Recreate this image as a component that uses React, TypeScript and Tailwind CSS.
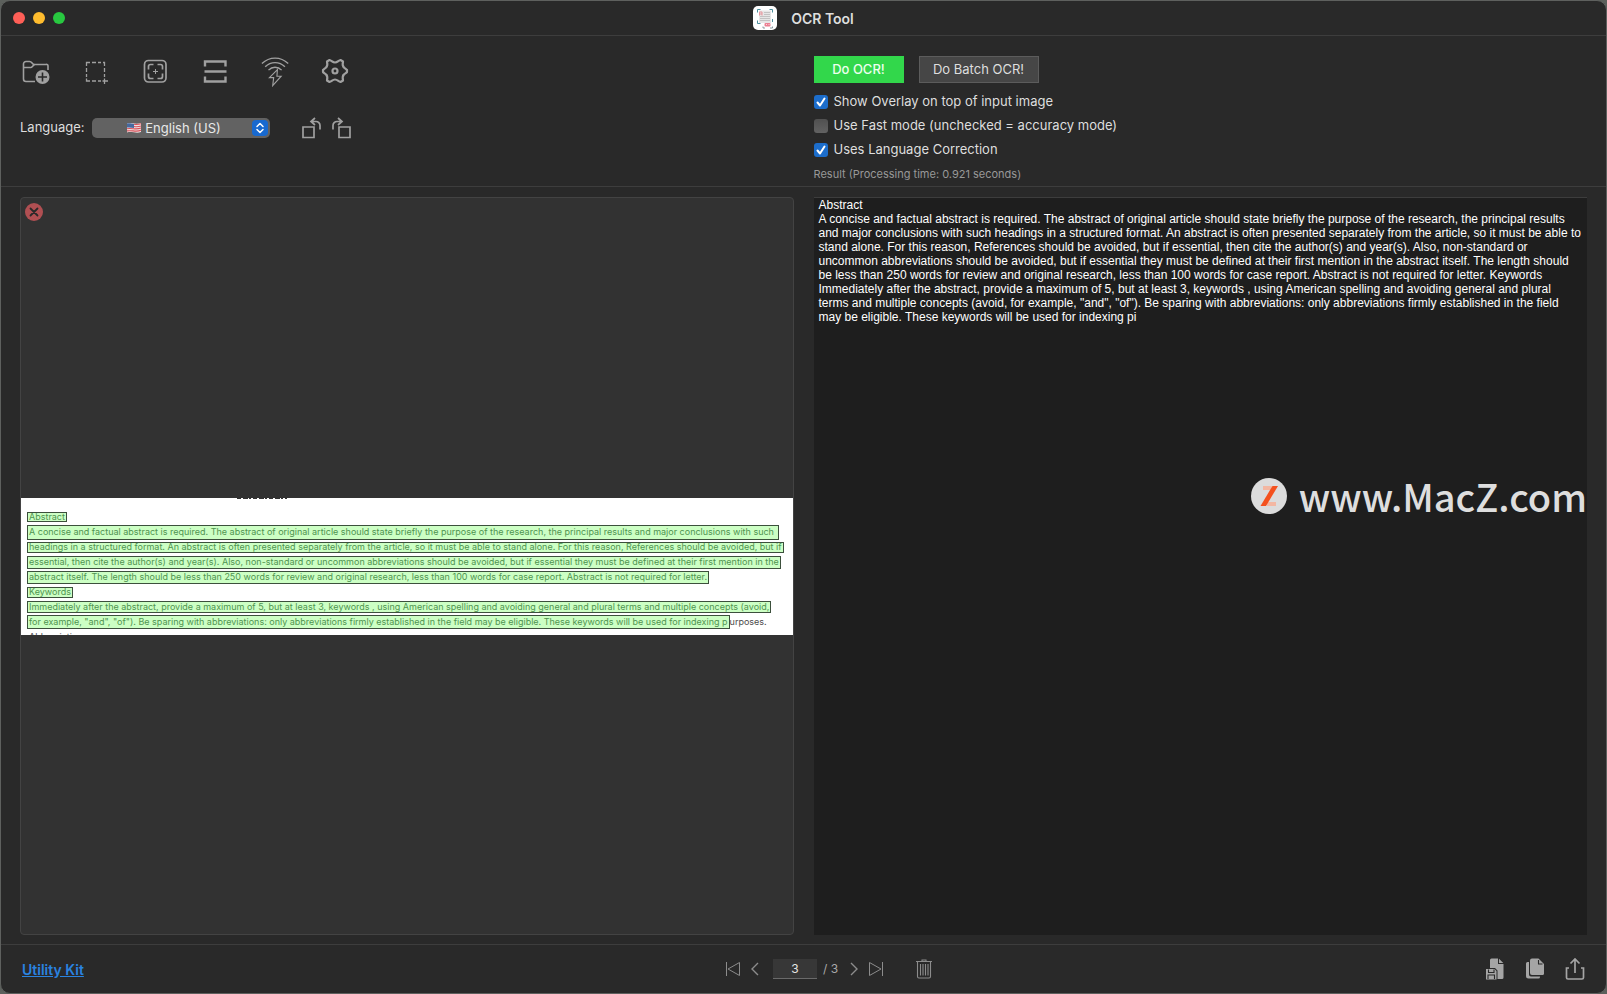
import React, { useState } from "react";

const RESULT_TEXT = `Abstract
A concise and factual abstract is required. The abstract of original article should state briefly the purpose of the research, the principal results and major conclusions with such headings in a structured format. An abstract is often presented separately from the article, so it must be able to stand alone. For this reason, References should be avoided, but if essential, then cite the author(s) and year(s). Also, non-standard or uncommon abbreviations should be avoided, but if essential they must be defined at their first mention in the abstract itself. The length should be less than 250 words for review and original research, less than 100 words for case report. Abstract is not required for letter. Keywords Immediately after the abstract, provide a maximum of 5, but at least 3, keywords , using American spelling and avoiding general and plural terms and multiple concepts (avoid, for example, "and", "of"). Be sparing with abbreviations: only abbreviations firmly established in the field may be eligible. These keywords will be used for indexing pi`;

// Recognised lines, each with the height of its bounding box
const scanLines = [
  { text: "Abstract", box: "h-[10px]", rest: "" },
  { text: "A concise and factual abstract is required. The abstract of original article should state briefly the purpose of the research, the principal results and major conclusions with such", box: "h-[15px] pr-1", rest: "" },
  { text: "headings in a structured format. An abstract is often presented separately from the article, so it must be able to stand alone. For this reason, References should be avoided, but if", box: "h-[11px]", rest: "" },
  { text: "essential, then cite the author(s) and year(s). Also, non-standard or uncommon abbreviations should be avoided, but if essential they must be defined at their first mention in the", box: "h-[13px]", rest: "" },
  { text: "abstract itself. The length should be less than 250 words for review and original research, less than 100 words for case report. Abstract is not required for letter.", box: "h-[13px]", rest: "" },
  { text: "Keywords", box: "h-[11px]", rest: "" },
  { text: "Immediately after the abstract, provide a maximum of 5, but at least 3, keywords , using American spelling and avoiding general and plural terms and multiple concepts (avoid,", box: "h-[12px]", rest: "" },
  { text: "for example, \"and\", \"of\"). Be sparing with abbreviations: only abbreviations firmly established in the field may be eligible. These keywords will be used for indexing p", box: "h-[14px]", rest: "urposes." },
];

interface IconProps {
  className?: string;
}

const FolderAddIcon = ({ className }: IconProps) => (
  <svg className={className} viewBox="0 0 30 30" fill="none" stroke="currentColor" strokeWidth="1.600">
    <path d="M14 24.500H5a2.500 2.500 0 0 1-2.500-2.500V7A2.500 2.500 0 0 1 5 4.500h3.500c1.500 0 2 .8 2.800 1.800.6.8 1 1.200 2.200 1.200h11.500A1.500 1.500 0 0 1 27 9v4" />
    <path d="M2.500 10.500H10c1.500 0 2.300-3 4-3" />
    <circle cx="21.500" cy="20" r="7" fill="currentColor" stroke="none" />
    <path d="M21.500 15.500v9M17 20h9" stroke="#292929" />
  </svg>
);

const SelectAreaIcon = ({ className }: IconProps) => (
  <svg className={className} viewBox="0 0 30 30" fill="none" stroke="currentColor" strokeWidth="1.300">
    <path d="M5.500 9V5.500H9M11 5.500h4M17 5.500h3M22 5.500h1.500V9M5.500 11v4M5.500 17v3M5.500 21.500V24H9M11 24h4M17 24h3M23.500 11v4M23.500 17v3M21.500 24h5.500M23.500 21.500V27" />
  </svg>
);

const FocusIcon = ({ className }: IconProps) => (
  <svg className={className} viewBox="0 0 30 30" fill="none" stroke="currentColor" strokeWidth="1.700">
    <rect x="3.500" y="3.500" width="21.500" height="21.500" rx="4" />
    <path d="M7.500 12.500v-3a2 2 0 0 1 2-2h3M16.500 7.500h3a2 2 0 0 1 2 2v3M21.500 16.500v3a2 2 0 0 1-2 2h-3M12.500 21.500h-3a2 2 0 0 1-2-2v-3" />
    <path d="M14.500 12v5M12 14.500h5" strokeWidth="1" />
  </svg>
);

const ScanIcon = ({ className }: IconProps) => (
  <svg className={className} viewBox="0 0 30 30" fill="none" stroke="currentColor" strokeWidth="2.400">
    <path d="M4 9.500V4.500h20.500v5M4 19.500v5h20.500v-5M3.500 14.500h22" />
  </svg>
);

const FlashIcon = ({ className }: IconProps) => (
  <svg className={className} viewBox="0 0 30 32" fill="none" stroke="currentColor" strokeWidth="1.500">
    <path d="M0 7C8-.7 20-.7 28 7M3.500 10.500c6-6 15-6 21 0M7 14c4-4 10-4 14 0" />
    <path d="M16.500 13.500 8 22h4.500L11.500 30.500l9-10H16z" strokeWidth="1.200" />
  </svg>
);

const GearIcon = ({ className }: IconProps) => (
  <svg className={className} viewBox="1 1 30 30" fill="none" stroke="currentColor" strokeWidth="2.200" strokeLinejoin="round">
    <path d="M9.500 4C11.500 4.500 12.500 6.500 15 6.500S18.500 4.500 20.500 4L23 5.500c-.5 2.500-1 4.500 1 6 1 1 2.300 1.500 3 2.500v2c-.7 1-2 1.500-3 2.500-2 1.500-1.500 3.500-1 6L20.500 26c-2-.5-3-2.500-5.500-2.500s-3.500 2-5.500 2.500L7 24.500c.5-2.500 1-4.500-1-6-1-1-2.300-1.500-3-2.500v-2c.7-1 2-1.500 3-2.500 2-1.500 1.500-3.500 1-6z" />
    <circle cx="15" cy="15" r="2.500" />
  </svg>
);

const RotateIcon = ({ className }: IconProps) => (
  <svg className={className} viewBox="0 0 22 24" fill="none" stroke="currentColor" strokeWidth="1.700">
    <path d="M2 11h11v10.500H2z" />
    <path d="M19 13.500V9.500A4 4 0 0 0 15 5.500H10.500M14 2l-4 3.500L14 9" />
  </svg>
);

const FlagIcon = ({ className }: IconProps) => (
  <svg className={className} viewBox="0 0 16 12">
    <path d="M1 1.500C5 0 9 3 15 1v9c-5 2-9-1-14 .5z" fill="#eee0e0" />
    <path d="M8 2.300c3 .4 5 .2 7-.6M8 4.500c3 .4 5 .2 7-.6M1 6.700c5-1 9 1.500 14-.6M1 8.900c5-1 9 1.500 14-.6" stroke="#d9525b" strokeWidth="1.100" fill="none" />
    <path d="M1 1.500C3.500.8 6 1.800 8 2v4c-2-.2-4.500-1-7-.4z" fill="#46699f" />
  </svg>
);

const AppIcon = ({ className }: IconProps) => (
  <svg className={className} viewBox="0 0 24 24" fill="none">
    <rect width="24" height="24" rx="5" fill="#fff" />
    <path d="M6 4.500h12v12.500H6z" fill="#e6e6e6" />
    <path d="M11 6.500H17M11 8.500H17M7 10.500H17M7 12.500H17M7 14.500H17" stroke="#b9b9b9" strokeWidth=".8" />
    <path d="M4.500 6.500V3.500H7.500M16.500 3.500h3V6.500M4.500 14.500v3H7.500M19.500 13v3" stroke="#4b8f9d" />
    <path d="M6.500 9.500V6h2.500v3.500M6.500 8h2.500" stroke="#e6959c" />
    <rect x="11.500" y="17" width="6" height="3.500" rx="1" fill="#ec7f92" />
    <path d="M13 18.500h1M15.500 18.500h1" stroke="#fff" strokeWidth=".7" />
    <path d="M10 20.500v1.500h2M17 22h2.500v-1.500" stroke="#71828b" strokeWidth=".8" />
  </svg>
);

const FirstPageIcon = ({ className }: IconProps) => (
  <svg className={className} viewBox="0 0 16 16" fill="none" stroke="currentColor" strokeWidth="1">
    <path d="M1.500 1v14M14.500 1.500v13L3 8z" />
  </svg>
);

const ChevronIcon = ({ className }: IconProps) => (
  <svg className={className} viewBox="0 0 8 14" fill="none" stroke="currentColor" strokeWidth="1.400">
    <path d="M7 1 1 7l6 6" />
  </svg>
);

const TrashIcon = ({ className }: IconProps) => (
  <svg className={className} viewBox="0 0 16 20" fill="none" stroke="currentColor" strokeWidth="1.100">
    <path d="M0 2.500h16M6 2.500V1h4v1.500M1.500 3v14.500a1.500 1.500 0 0 0 1.500 1.500h10a1.500 1.500 0 0 0 1.500-1.500V3M4.500 5v11.500M7 5v11.500M9.500 5v11.500M12 5v11.500" />
  </svg>
);

const SaveFileIcon = ({ className }: IconProps) => (
  <svg className={className} viewBox="0 0 20 22">
    <path d="M5 2a1.500 1.500 0 0 1 1.500-1.500H13V6h5.500v13.500A1.500 1.500 0 0 1 17 21h-4.500v-8.500L10 10H5zM14 .8 18.300 5H14z" fill="currentColor" />
    <path d="M1 11h8.500l2 2v8.500H1z" fill="currentColor" />
    <path d="M3.500 11.500v3H9v-3M3 21v-4h6.500v4" fill="none" stroke="#292929" strokeWidth="1.100" />
  </svg>
);

const CopyIcon = ({ className }: IconProps) => (
  <svg className={className} viewBox="0 0 20 22">
    <path d="M1 5.500A1.500 1.500 0 0 1 2.500 4H4v12.500a2 2 0 0 0 2 2h9v.5a1.500 1.500 0 0 1-1.500 1.500h-10A2.500 2.500 0 0 1 1 18z" fill="currentColor" />
    <path d="M7 .5h6.500l5.500 5.500v9.500A1.500 1.500 0 0 1 17.500 17H7a2 2 0 0 1-2-2V2.500a2 2 0 0 1 2-2z" fill="currentColor" />
    <path d="M13.500 2v4h4" fill="none" stroke="#292929" strokeWidth="1.100" />
  </svg>
);

const ShareIcon = ({ className }: IconProps) => (
  <svg className={className} viewBox="0 0 20 24" fill="none" stroke="currentColor" strokeWidth="1.700">
    <path d="M4 11H1.500v9.500a1.500 1.500 0 0 0 1.500 1.500h14a1.500 1.500 0 0 0 1.500-1.500V11H16M10 16V2M5.500 6.500 10 2l4.500 4.500" />
  </svg>
);

const tools = [
  { name: "Open files", icon: FolderAddIcon },
  { name: "Select area", icon: SelectAreaIcon },
  { name: "Capture screen", icon: FocusIcon },
  { name: "Scan document", icon: ScanIcon },
  { name: "Quick capture", icon: FlashIcon },
  { name: "Settings", icon: GearIcon },
];

interface CheckOptionProps {
  label: string;
  checked: boolean;
  onChange: (value: boolean) => void;
}

function CheckOption({ label, checked, onChange }: CheckOptionProps) {
  return (
    <label className="flex h-6 w-fit items-center gap-[6px] text-[13px]">
      <span className="grid">
        <input
          type="checkbox"
          checked={checked}
          onChange={(e) => onChange(e.target.checked)}
          className="col-start-1 row-start-1 h-[14px] w-[14px] appearance-none rounded-[3px] bg-linear-to-b from-[#505050] to-[#626262] checked:from-[#1c6dcb] checked:to-[#1c6dcb]"
        />
        {checked && (
          <svg className="pointer-events-none col-start-1 row-start-1 h-[14px] w-[14px]" viewBox="0 0 14 14" fill="none" stroke="#fff" strokeWidth="2" strokeLinecap="round" strokeLinejoin="round">
            <path d="m3.500 7.500 2.500 3 4.500-7" />
          </svg>
        )}
      </span>
      {label}
    </label>
  );
}

export default function App() {
  const [overlay, setOverlay] = useState(true);
  const [fastMode, setFastMode] = useState(false);
  const [correction, setCorrection] = useState(true);
  const [page, setPage] = useState("3");
  const [result, setResult] = useState(RESULT_TEXT);

  return (
    <div className="h-screen bg-[#5c605c]">
      <div className="flex h-full flex-col overflow-hidden rounded-[10px] border border-[#5e605e] bg-[#292929] font-['Inter',sans-serif] text-[#dedede]">
        {/* Title bar */}
        <header className="grid h-[35px] shrink-0 grid-cols-3 items-center border-b border-[#3d3d3d] px-3">
          <div className="flex gap-2">
            <button aria-label="Close" className="h-3 w-3 rounded-full bg-[#fe5f57]" />
            <button aria-label="Minimize" className="h-3 w-3 rounded-full bg-[#febc2e]" />
            <button aria-label="Zoom" className="h-3 w-3 rounded-full bg-[#28c840]" />
          </div>
          <div className="flex items-center justify-center gap-[14px]">
            <AppIcon className="h-6 w-6" />
            <h1 className="text-[14px] font-semibold">OCR Tool</h1>
          </div>
        </header>

        {/* Toolbar */}
        <section className="grid h-[151px] shrink-0 grid-cols-2 gap-5 border-b border-[#3d3d3d] px-[19px]">
          <div className="pt-5">
            <div className="flex gap-[30px] pl-px text-[#a0a0a0]">
              {tools.map((tool) => (
                <button key={tool.name} aria-label={tool.name} className="flex h-8 w-[30px] items-center justify-center">
                  <tool.icon className="h-[30px] w-[30px]" />
                </button>
              ))}
            </div>
            <div className="mt-7 flex h-6 items-center">
              <label htmlFor="language" className="w-[72px] text-[13px]">Language:</label>
              <div className="relative">
                <select id="language" className="block h-5 w-[178px] appearance-none rounded-[5px] bg-[#626262] pr-[22px] pl-[26px] text-center text-[13px] leading-5 text-[#e8e8e8]">
                  <option>English (US)</option>
                </select>
                <FlagIcon className="pointer-events-none absolute top-1 left-[34px] h-3 w-4" />
                <span className="pointer-events-none absolute top-[2px] right-[2px] flex h-4 w-4 items-center justify-center rounded-[4px] bg-[#1869cf]">
                  <svg className="h-3 w-3" viewBox="0 0 12 12" fill="none" stroke="#fff" strokeWidth="1.500" strokeLinecap="round" strokeLinejoin="round">
                    <path d="M3 4.500 6 1.500l3 3M3 7.500l3 3 3-3" />
                  </svg>
                </span>
              </div>
              <div className="ml-[31px] flex gap-[7px] text-[#a0a0a0]">
                <button aria-label="Rotate left"><RotateIcon className="h-6 w-[22px]" /></button>
                <button aria-label="Rotate right"><RotateIcon className="h-6 w-[22px] -scale-x-100" /></button>
              </div>
            </div>
          </div>

          <div className="pt-5">
            <div className="mb-[7px] flex gap-[15px] text-[13px]">
              <button className="h-[27px] w-[90px] bg-[#32d74b] pt-px font-medium text-[#ecffee]">Do OCR!</button>
              <button className="h-[27px] w-[120px] border border-[#5c5c5c] bg-[#464646] pt-px">Do Batch OCR!</button>
            </div>
            <CheckOption label="Show Overlay on top of input image" checked={overlay} onChange={setOverlay} />
            <CheckOption label="Use Fast mode (unchecked = accuracy mode)" checked={fastMode} onChange={setFastMode} />
            <CheckOption label="Uses Language Correction" checked={correction} onChange={setCorrection} />
            <p className="mt-1 text-[11px] leading-4 text-[#989898]">Result (Processing time: 0.921 seconds)</p>
          </div>
        </section>

        {/* Image preview and recognised text */}
        <main className="grid min-h-0 flex-1 grid-cols-2 gap-5 px-[19px] pt-[10px] pb-[9px]">
          <div className="relative flex flex-col justify-center overflow-hidden rounded-[4px] border border-[#434343] bg-[#323232]">
            <button aria-label="Remove image" className="absolute top-[5px] left-1">
              <svg className="h-[18px] w-[18px]" viewBox="0 0 18 18" stroke="#292929" strokeWidth="1.800" strokeLinecap="round">
                <circle cx="9" cy="9" r="9" fill="#b04f52" stroke="none" />
                <path d="m5.500 5.500 7 7M12.500 5.500l-7 7" />
              </svg>
            </button>
            <div className="flex h-[137px] shrink-0 flex-col overflow-hidden bg-white font-['Inter',sans-serif] text-[9px] text-[#4c4c4c]">
              <svg className="ml-[216px] h-1 w-[50px] shrink-0" viewBox="0 0 50 4" stroke="#333" strokeWidth="1">
                <path d="M0 .5h50" strokeDasharray="4 2 5 1 2 2" />
              </svg>
              <div className="mt-2 shrink-0 pl-[6px]">
                {scanLines.map((line) => (
                  <div key={line.text} className="flex h-[15px] items-center whitespace-nowrap">
                    <span className={`flex items-center px-px ${line.box} ${overlay ? "border border-[#3c503c] bg-[#ccffc4] text-[#4f9450]" : "border border-transparent"}`}>
                      {line.text}
                    </span>
                    {line.rest}
                  </div>
                ))}
                <p className="pl-[2px] leading-[14px]">Abbreviations</p>
              </div>
            </div>
          </div>

          <div className="relative flex">
            <textarea
              aria-label="Recognised text"
              value={result}
              onChange={(e) => setResult(e.target.value)}
              spellCheck={false}
              className="w-full resize-none border-t border-[#3d3d3d] bg-[#1e1e1e] px-[5px] font-['Liberation_Sans',sans-serif] text-[12px] leading-[14px] text-white outline-none"
            />
            <div className="pointer-events-none absolute top-[277px] right-0 flex items-center gap-3 text-[#dedede]">
              <svg className="h-9 w-9" viewBox="0 0 36 36" fill="none">
                <circle cx="18" cy="18" r="18" fill="#dcdcdc" />
                <path d="M12 10h9M16 26h9" stroke="#f3b7a2" strokeWidth="4" />
                <path d="M21.500 8H27L15 28H9.500z" fill="#f4511e" />
              </svg>
              <span className="font-['Noto_Sans_CJK_SC',sans-serif] text-[38px] leading-[44px] font-medium">www.MacZ.com</span>
            </div>
          </div>
        </main>

        {/* Footer */}
        <footer className="grid h-[49px] shrink-0 grid-cols-3 items-center border-t border-[#3d3d3d] px-[21px]">
          <a href="#" className="w-fit text-[14px] font-semibold text-[#2a83e0] underline">Utility Kit</a>
          <div className="flex items-center justify-center pl-[50px] text-[#8c8c8c]">
            <button aria-label="First page"><FirstPageIcon className="h-4 w-4" /></button>
            <button aria-label="Previous page" className="ml-[10px]"><ChevronIcon className="h-[14px] w-2" /></button>
            <input
              aria-label="Page"
              value={page}
              onChange={(e) => setPage(e.target.value)}
              className="ml-[14px] h-5 w-11 border-b border-[#6a6a6a] bg-[#373737] text-center text-[12px] text-[#e4e4e4] outline-none"
            />
            <span className="ml-[6px] text-[12px] text-[#a8a8a8]">/ 3</span>
            <button aria-label="Next page" className="ml-3"><ChevronIcon className="h-[14px] w-2 rotate-180" /></button>
            <button aria-label="Last page" className="ml-[10px]"><FirstPageIcon className="h-4 w-4 rotate-180" /></button>
            <button aria-label="Delete page" className="ml-8"><TrashIcon className="h-5 w-4" /></button>
          </div>
          <div className="flex items-center justify-end gap-5 text-[#a5a5a5]">
            <button aria-label="Save text"><SaveFileIcon className="h-[22px] w-5" /></button>
            <button aria-label="Copy text"><CopyIcon className="h-[22px] w-5" /></button>
            <button aria-label="Share"><ShareIcon className="h-6 w-5" /></button>
          </div>
        </footer>
      </div>
    </div>
  );
}
